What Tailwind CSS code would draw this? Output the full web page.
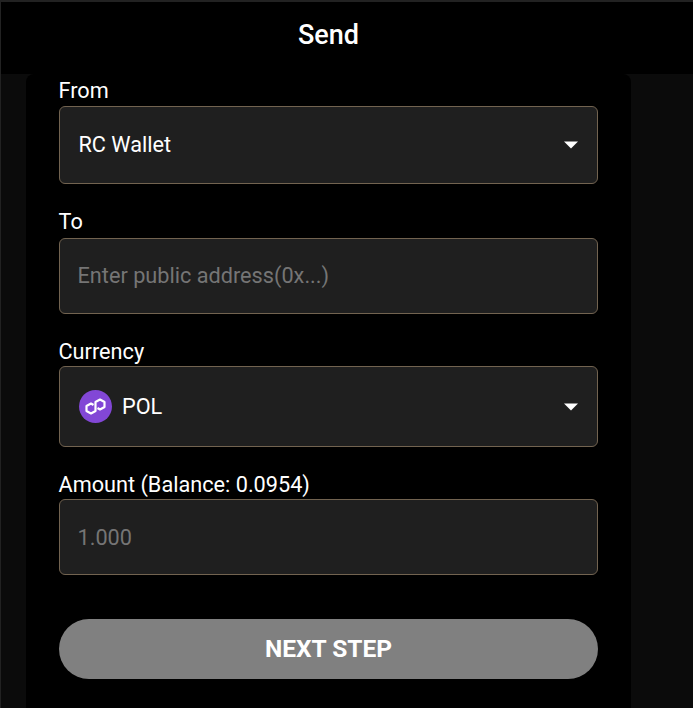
<!DOCTYPE html>
<html>
<head>
<meta charset="utf-8">
<script src="https://cdn.jsdelivr.net/npm/@tailwindcss/browser@4"></script>
</head>
<body class="bg-black">
<div class="w-[693px] h-[708px] overflow-hidden flex flex-col bg-[#0b0b0b] border-t-2 border-l border-[#222222] font-['Roboto',sans-serif] text-white">
    <header class="h-[72px] shrink-0 bg-black flex items-center justify-center pr-[37px]">
        <h1 class="text-[27px] font-medium leading-none -mt-[6px]">Send</h1>
    </header>
    <main class="w-[605px] ml-[25px] grow rounded-t-[8px] bg-black px-[33px] pt-[4px]">
        <label class="block text-[21.7px] leading-[24px] mb-[3px] pt-[1px] -ml-[0.5px]">From</label>
        <div class="h-[78px] rounded-[6px] border border-[#726350] bg-[#1f1f1f] flex items-center justify-between pl-[18.5px] pr-[19px]">
            <span class="text-[21.7px]">RC Wallet</span>
            <svg width="14" height="8" viewBox="0 0 14 8"><path d="M0 0.5H14L7 7.5Z" fill="#fff"/></svg>
        </div>
        <label class="block text-[21.7px] leading-[24px] mt-[26px] mb-[4px] -ml-[0.5px]">To</label>
        <div class="h-[76px] rounded-[6px] border border-[#726350] bg-[#1f1f1f] flex items-center pl-[17.5px]">
            <span class="text-[21.7px] text-[#757575]">Enter public address(0x...)</span>
        </div>
        <label class="block text-[21.7px] leading-[24px] mt-[26px] mb-[2px] -ml-[0.5px]">Currency</label>
        <div class="h-[81px] rounded-[6px] border border-[#726350] bg-[#1f1f1f] flex items-center justify-between pl-[18.5px] pr-[19px]">
            <div class="flex items-center gap-[11px] mt-[1px]">
                <svg width="33" height="33" viewBox="0 0 33 33">
                    <circle cx="16.5" cy="16.5" r="16.5" fill="#8247d6"/>
                    <path d="M14.5 15 L12 13.5 L7.5 16 V21 L12 23.5 L16.5 21 V12 L21 9.5 L25.5 12 V17 L21 19.5 L18.5 18" fill="none" stroke="#fff" stroke-width="2.2" stroke-linejoin="round"/>
                </svg>
                <span class="text-[21.7px] mt-[1px] -ml-[0.5px]">POL</span>
            </div>
            <svg width="14" height="8" viewBox="0 0 14 8"><path d="M0 0.5H14L7 7.5Z" fill="#fff"/></svg>
        </div>
        <label class="block text-[21.7px] leading-[24px] mt-[26px] mb-[2px] -ml-[0.5px]">Amount (Balance: 0.0954)</label>
        <div class="h-[76px] rounded-[6px] border border-[#726350] bg-[#1f1f1f] flex items-center pl-[17.5px]">
            <span class="text-[21.7px] text-[#757575] mt-[2px]">1.000</span>
        </div>
        <button class="block w-full h-[60px] mt-[44px] rounded-full bg-[#808080] text-white text-[24.5px] font-bold">NEXT STEP</button>
    </main>
</div>
</body>
</html>
